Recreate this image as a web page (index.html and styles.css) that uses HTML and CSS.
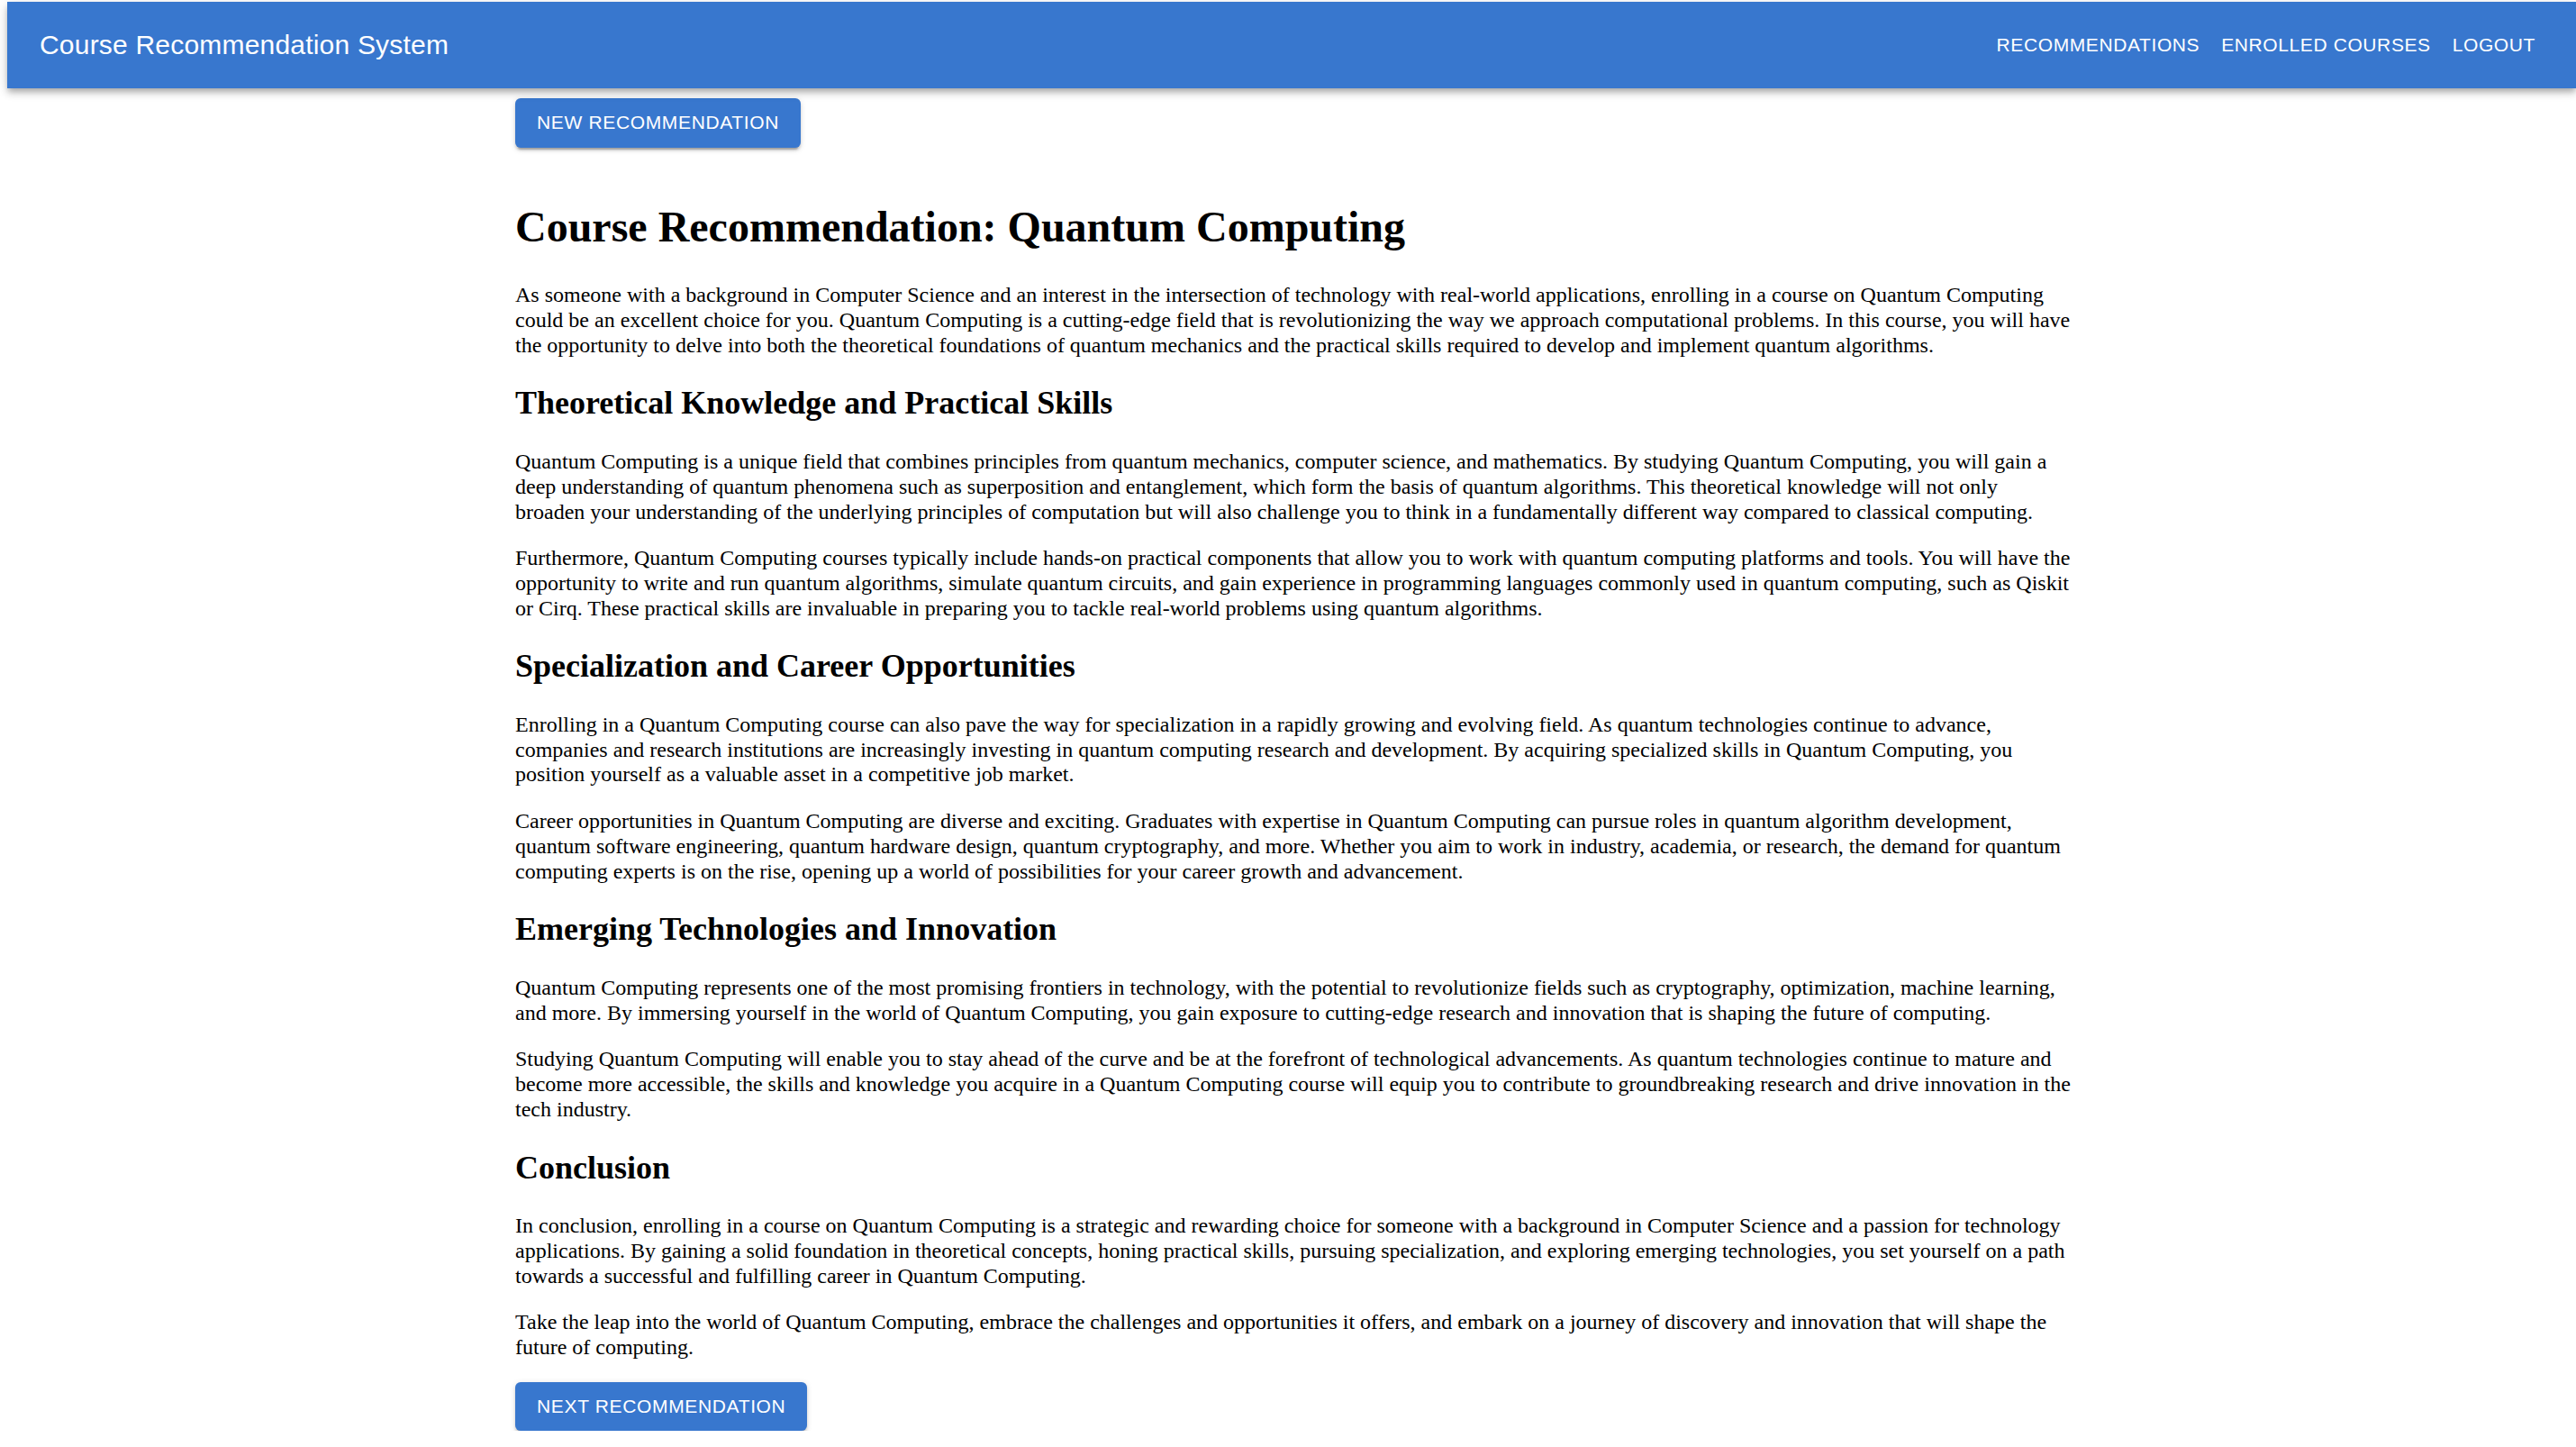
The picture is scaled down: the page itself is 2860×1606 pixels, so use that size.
FILE: index.html
```html
<!DOCTYPE html>
<html lang="en">
<head>
<meta charset="utf-8">
<title>Course Recommendation System</title>
<link rel="stylesheet" href="styles.css">
</head>
<body>
<header class="appbar">
  <div class="brand">Course Recommendation System</div>
  <nav class="nav">
    <a class="nav-btn">Recommendations</a>
    <a class="nav-btn">Enrolled Courses</a>
    <a class="nav-btn">Logout</a>
  </nav>
</header>
<main class="page">
  <div class="container">
    <div class="top-actions">
      <button class="btn">New Recommendation</button>
    </div>
    <article class="content">
      <h1>Course Recommendation: Quantum Computing</h1>
      <p>As someone with a background in Computer Science and an interest in the intersection of technology with real-world applications, enrolling in a course on Quantum Computing could be an excellent choice for you. Quantum Computing is a cutting-edge field that is revolutionizing the way we approach computational problems. In this course, you will have the opportunity to delve into both the theoretical foundations of quantum mechanics and the practical skills required to develop and implement quantum algorithms.</p>
      <h2>Theoretical Knowledge and Practical Skills</h2>
      <p>Quantum Computing is a unique field that combines principles from quantum mechanics, computer science, and mathematics. By studying Quantum Computing, you will gain a deep understanding of quantum phenomena such as superposition and entanglement, which form the basis of quantum algorithms. This theoretical knowledge will not only broaden your understanding of the underlying principles of computation but will also challenge you to think in a fundamentally different way compared to classical computing.</p>
      <p>Furthermore, Quantum Computing courses typically include hands-on practical components that allow you to work with quantum computing platforms and tools. You will have the opportunity to write and run quantum algorithms, simulate quantum circuits, and gain experience in programming languages commonly used in quantum computing, such as Qiskit or Cirq. These practical skills are invaluable in preparing you to tackle real-world problems using quantum algorithms.</p>
      <h2>Specialization and Career Opportunities</h2>
      <p>Enrolling in a Quantum Computing course can also pave the way for specialization in a rapidly growing and evolving field. As quantum technologies continue to advance, companies and research institutions are increasingly investing in quantum computing research and development. By acquiring specialized skills in Quantum Computing, you position yourself as a valuable asset in a competitive job market.</p>
      <p>Career opportunities in Quantum Computing are diverse and exciting. Graduates with expertise in Quantum Computing can pursue roles in quantum algorithm development, quantum software engineering, quantum hardware design, quantum cryptography, and more. Whether you aim to work in industry, academia, or research, the demand for quantum computing experts is on the rise, opening up a world of possibilities for your career growth and advancement.</p>
      <h2>Emerging Technologies and Innovation</h2>
      <p>Quantum Computing represents one of the most promising frontiers in technology, with the potential to revolutionize fields such as cryptography, optimization, machine learning, and more. By immersing yourself in the world of Quantum Computing, you gain exposure to cutting-edge research and innovation that is shaping the future of computing.</p>
      <p>Studying Quantum Computing will enable you to stay ahead of the curve and be at the forefront of technological advancements. As quantum technologies continue to mature and become more accessible, the skills and knowledge you acquire in a Quantum Computing course will equip you to contribute to groundbreaking research and drive innovation in the tech industry.</p>
      <h2>Conclusion</h2>
      <p>In conclusion, enrolling in a course on Quantum Computing is a strategic and rewarding choice for someone with a background in Computer Science and a passion for technology applications. By gaining a solid foundation in theoretical concepts, honing practical skills, pursuing specialization, and exploring emerging technologies, you set yourself on a path towards a successful and fulfilling career in Quantum Computing.</p>
      <p>Take the leap into the world of Quantum Computing, embrace the challenges and opportunities it offers, and embark on a journey of discovery and innovation that will shape the future of computing.</p>
    </article>
    <div class="bottom-actions">
      <button class="btn">Next Recommendation</button>
    </div>
  </div>
</main>
</body>
</html>
```
FILE: styles.css
```css
html, body {
  background: #ffffff;
}

body {
  margin: 0;
  color: #000000;
  font-family: "Liberation Serif", "Times New Roman", serif;
  font-size: 24px;
}

.appbar {
  position: relative;
  z-index: 2;
  box-sizing: border-box;
  margin: 2px 0 0 8px;
  height: 96px;
  padding: 0 33px 0 36px;
  display: flex;
  align-items: center;
  background: #3877ce;
  color: #ffffff;
  font-family: "Liberation Sans", Arial, Helvetica, sans-serif;
  box-shadow: 0 3px 6px -1.5px rgba(0, 0, 0, 0.2),
              0 6px 7.5px 0 rgba(0, 0, 0, 0.14),
              0 1.5px 15px 0 rgba(0, 0, 0, 0.12);
}

.brand {
  flex: 1;
  font-size: 30px;
  line-height: 1.6;
  letter-spacing: 0.2px;
}

.nav {
  display: flex;
  align-items: center;
}

.nav-btn {
  padding: 9px 12px;
  font-size: 21px;
  line-height: 1.75;
  letter-spacing: 0.6px;
  text-transform: uppercase;
  color: #ffffff;
  cursor: pointer;
}

.page {
  padding-left: 12px;
}

.container {
  box-sizing: border-box;
  max-width: 1800px;
  margin: 0 auto;
  padding: 0 36px;
}

.top-actions {
  margin-top: 11px;
}

.btn {
  display: inline-block;
  border: 0;
  margin: 0;
  padding: 9px 24px;
  border-radius: 6px;
  background: #3877ce;
  color: #ffffff;
  font-family: "Liberation Sans", Arial, Helvetica, sans-serif;
  font-size: 21px;
  line-height: 36.75px;
  letter-spacing: 0.65px;
  text-transform: uppercase;
  cursor: pointer;
  box-shadow: 0 4.5px 1.5px -3px rgba(0, 0, 0, 0.2),
              0 3px 3px 0 rgba(0, 0, 0, 0.14),
              0 1.5px 7.5px 0 rgba(0, 0, 0, 0.12);
}

.bottom-actions {
  display: block;
}

.content {
  padding-top: 28px;
}

.content h1 {
  font-size: 48px;
  line-height: 55.6px;
  margin: 32px 0 35px;
}

.content h2 {
  font-size: 36px;
  line-height: 41.7px;
  margin: 30px 0;
}

.content p {
  line-height: 27.7px;
  margin: 24px 0;
}
```
